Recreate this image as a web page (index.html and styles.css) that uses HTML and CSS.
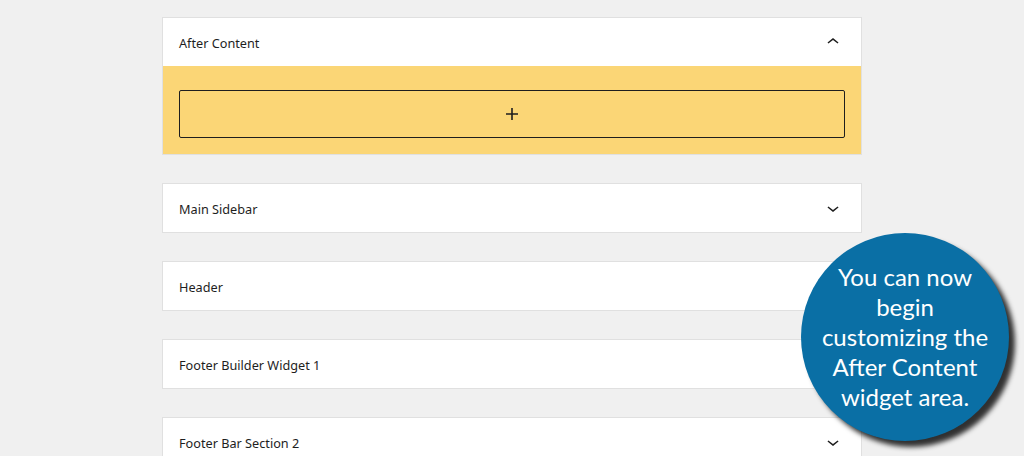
FILE: index.html
```html
<!DOCTYPE html>
<html>
<head>
<meta charset="utf-8">
<link rel="stylesheet" href="styles.css">
</head>
<body>
<div class="list">
  <section class="panel open">
    <div class="head">
      <span class="title">After Content</span>
      <svg class="chev" viewBox="0 0 24 24" width="24" height="24"><path d="M6.5 12.4L12 8l5.5 4.4-.9 1.2L12 10l-4.6 3.6-.9-1.2z"/></svg>
    </div>
    <div class="body">
      <div class="adder">
        <svg viewBox="0 0 24 24" width="24" height="24"><path d="M18 11.2h-5.2V6h-1.6v5.2H6v1.6h5.2V18h1.6v-5.2H18z"/></svg>
      </div>
    </div>
  </section>
  <section class="panel">
    <div class="head">
      <span class="title">Main Sidebar</span>
      <svg class="chev" viewBox="0 0 24 24" width="24" height="24"><path d="M17.5 11.6L12 16l-5.5-4.4.9-1.2L12 14l4.6-3.6 1 1.2z"/></svg>
    </div>
  </section>
  <section class="panel">
    <div class="head">
      <span class="title">Header</span>
      <svg class="chev" viewBox="0 0 24 24" width="24" height="24"><path d="M17.5 11.6L12 16l-5.5-4.4.9-1.2L12 14l4.6-3.6 1 1.2z"/></svg>
    </div>
  </section>
  <section class="panel">
    <div class="head">
      <span class="title">Footer Builder Widget 1</span>
      <svg class="chev" viewBox="0 0 24 24" width="24" height="24"><path d="M17.5 11.6L12 16l-5.5-4.4.9-1.2L12 14l4.6-3.6 1 1.2z"/></svg>
    </div>
  </section>
  <section class="panel">
    <div class="head">
      <span class="title">Footer Bar Section 2</span>
      <svg class="chev" viewBox="0 0 24 24" width="24" height="24"><path d="M17.5 11.6L12 16l-5.5-4.4.9-1.2L12 14l4.6-3.6 1 1.2z"/></svg>
    </div>
  </section>
</div>
<div class="bubble">
  <p>You can now begin customizing the After Content widget area.</p>
</div>
</body>
</html>
```
FILE: styles.css
```css
html, body {
  margin: 0;
  padding: 0;
  background: #f0f0f0;
  height: 456px;
  overflow: hidden;
}
body {
  font-family: "Noto Sans", "Open Sans", sans-serif;
  color: #1e1e1e;
}
.list {
  width: 700px;
  margin-left: 162px;
  padding-top: 17px;
  display: flex;
  flex-direction: column;
  gap: 28px;
}
.panel {
  background: #fff;
  border: 1px solid #e0e0e0;
}
.head {
  height: 48px;
  display: flex;
  align-items: center;
  justify-content: space-between;
  padding: 0 16px 0 16px;
}
.title {
  font-size: 12.7px;
  padding-top: 2px;
}
.chev {
  fill: #1e1e1e;
  display: block;
}
.body {
  background: #fbd676;
  padding: 24px 16px 16px;
}
.adder {
  height: 46px;
  border: 1px solid #1e1e1e;
  border-radius: 2px;
  display: flex;
  align-items: center;
  justify-content: center;
}
.adder svg {
  fill: #1e1e1e;
  display: block;
}
.bubble {
  position: absolute;
  left: 801px;
  top: 233px;
  width: 208px;
  height: 208px;
  border-radius: 50%;
  background: #0a6fa5;
  box-shadow: 6px 6px 5px rgba(0,0,0,0.8);
  display: flex;
  align-items: center;
  justify-content: center;
}
.bubble p {
  margin: 0;
  width: 170px;
  text-align: center;
  color: #fff;
  font-family: Lato, "Open Sans", sans-serif;
  font-size: 24px;
  line-height: 30px;
}
```
